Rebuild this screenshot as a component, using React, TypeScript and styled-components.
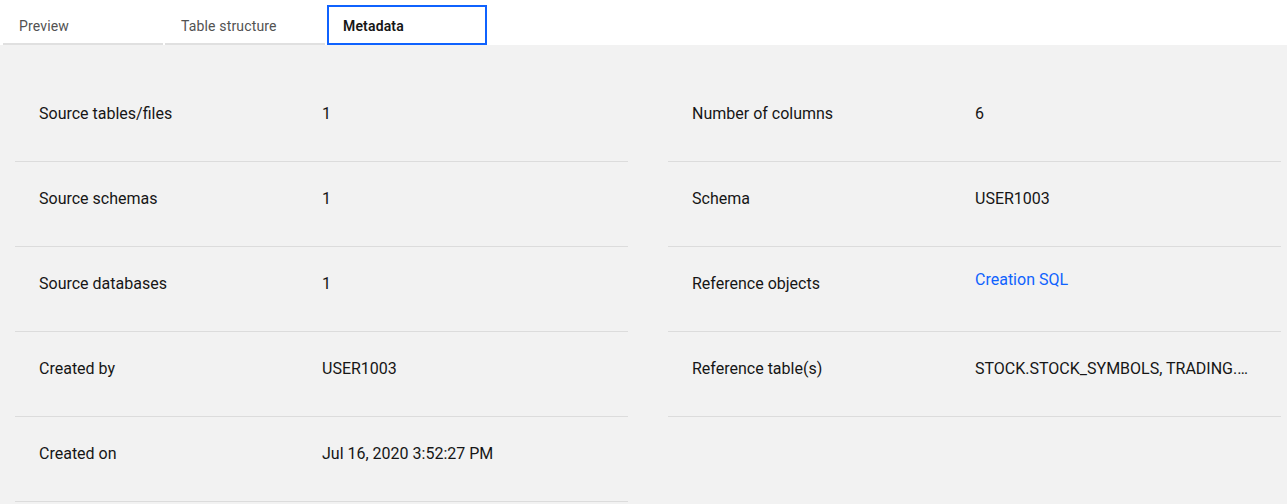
import React from "react";
import styled, { createGlobalStyle } from "styled-components";

const Global = createGlobalStyle`
  html, body { margin: 0; padding: 0; background: #ffffff; }
  body { font-family: Roboto, "Noto Sans", "Liberation Sans", sans-serif; color: #161616; }
  * { box-sizing: border-box; }
`;

const Page = styled.div`
  width: 1287px;
  height: 504px;
  display: flex;
  flex-direction: column;
  overflow: hidden;
`;

const TabList = styled.div`
  display: flex;
  gap: 2px;
  padding: 5px 0 0 3px;
  background: #ffffff;
`;

const Tab = styled.div<{ $selected?: boolean }>`
  width: 160px;
  height: 40px;
  padding: 12px 16px 0;
  font-size: 14px;
  line-height: 18px;
  letter-spacing: 0.16px;
  color: ${(p) => (p.$selected ? "#161616" : "#525252")};
  font-weight: ${(p) => (p.$selected ? 600 : 400)};
  border-bottom: 2px solid ${(p) => (p.$selected ? "transparent" : "#e0e0e0")};
  outline: ${(p) => (p.$selected ? "2px solid #0f62fe" : "none")};
  outline-offset: -2px;
  cursor: pointer;
`;

const Content = styled.div`
  flex: 1;
  background: #f2f2f2;
  padding: 32px 6px 0 15px;
  display: grid;
  grid-template-columns: 613px 613px;
  column-gap: 40px;
  align-items: start;
`;

const Column = styled.div`
  display: flex;
  flex-direction: column;
`;

const Row = styled.div`
  height: 85px;
  border-bottom: 1px solid #dcdcdc;
  display: grid;
  grid-template-columns: 283px 1fr;
  align-items: start;
  padding: 26px 30px 0 24px;
  font-size: 16px;
  line-height: 22px;
`;

const Label = styled.div`
  color: #161616;
`;

const Value = styled.div<{ $raised?: boolean }>`
  color: #161616;
  white-space: nowrap;
  overflow: hidden;
  text-overflow: ellipsis;
  margin-top: ${(p) => (p.$raised ? "-4px" : "0")};
`;

const Link = styled.a`
  color: #0f62fe;
  text-decoration: none;
  cursor: pointer;
`;

type Item = { label: string; value: React.ReactNode; link?: boolean };

const left: Item[] = [
  { label: "Source tables/files", value: "1" },
  { label: "Source schemas", value: "1" },
  { label: "Source databases", value: "1" },
  { label: "Created by", value: "USER1003" },
  { label: "Created on", value: "Jul 16, 2020 3:52:27 PM" },
];

const right: Item[] = [
  { label: "Number of columns", value: "6" },
  { label: "Schema", value: "USER1003" },
  { label: "Reference objects", value: <Link>Creation SQL</Link>, link: true },
  { label: "Reference table(s)", value: "STOCK.STOCK_SYMBOLS, TRADING.…" },
];

function MetaColumn({ items }: { items: Item[] }) {
  return (
    <Column>
      {items.map((it) => (
        <Row key={it.label}>
          <Label>{it.label}</Label>
          <Value $raised={it.link}>{it.value}</Value>
        </Row>
      ))}
    </Column>
  );
}

export default function App() {
  return (
    <Page>
      <Global />
      <TabList>
        <Tab>Preview</Tab>
        <Tab>Table structure</Tab>
        <Tab $selected>Metadata</Tab>
      </TabList>
      <Content>
        <MetaColumn items={left} />
        <MetaColumn items={right} />
      </Content>
    </Page>
  );
}
